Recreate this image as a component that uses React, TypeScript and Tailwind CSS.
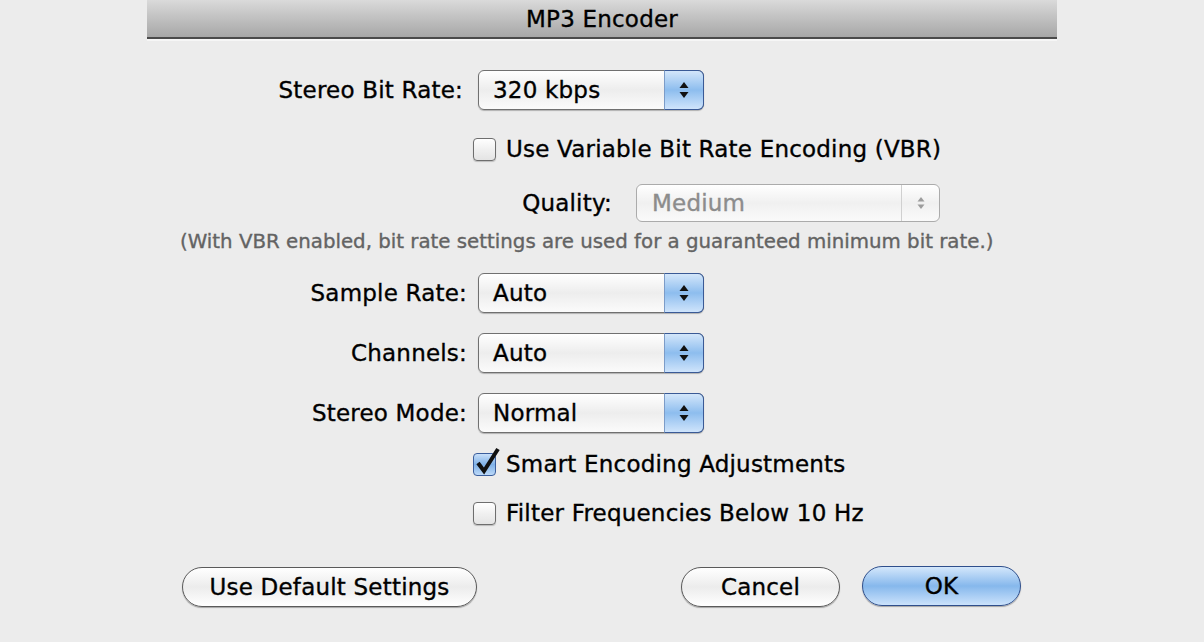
import React from "react";

const font = { fontFamily: '"DejaVu Sans", "Liberation Sans", sans-serif' };

function Arrows() {
  return (
    <svg width="12" height="22" viewBox="0 0 12 22">
      <polygon points="6,3 10.5,9 1.5,9" fill="#111" />
      <polygon points="1.5,13 10.5,13 6,19" fill="#111" />
    </svg>
  );
}

function Select({ value }: { value: string }) {
  return (
    <div className="relative w-[226px] h-[40px] rounded-[6px] border border-[#707070] bg-gradient-to-b from-white via-[#ededed] to-[#fbfbfb] shadow-[0_1px_1px_rgba(0,0,0,0.25)] flex items-center pl-[14px] text-[23px] text-black">
      {value}
      <div className="absolute -top-px -right-px -bottom-px w-[40px] rounded-r-[6px] border border-[#3a5a96] border-l-[#7c9cc8] bg-gradient-to-b from-[#d3e6fa] via-[#8dbdee] to-[#cfe4fb] flex items-center justify-center">
        <Arrows />
      </div>
    </div>
  );
}

function DisabledSelect({ value }: { value: string }) {
  return (
    <div className="relative w-[304px] h-[38px] rounded-[6px] border border-[#ababab] bg-gradient-to-b from-white via-[#f0f0f0] to-[#fafafa] flex items-center pl-[15px] text-[23px] text-[#8c8c8c]">
      {value}
      <div className="absolute top-0 right-0 bottom-0 w-[38px] border-l border-[#d0d0d0] flex items-center justify-center">
        <svg width="10" height="18" viewBox="0 0 10 18">
          <polygon points="5,3 8.5,7.5 1.5,7.5" fill="#9c9c9c" />
          <polygon points="1.5,10.5 8.5,10.5 5,15" fill="#9c9c9c" />
        </svg>
      </div>
    </div>
  );
}

function Checkbox({ checked }: { checked?: boolean }) {
  if (checked) {
    return (
      <div className="relative w-[23px] h-[23px] rounded-[4px] border border-[#3b5e9c] bg-gradient-to-b from-[#c9e0f9] via-[#7fb1e7] to-[#bcd9f8] shrink-0">
        <svg className="absolute -top-[8px] left-[1px]" width="26" height="30" viewBox="0 0 26 30">
          <path d="M3 17 L9 25 L23 3" stroke="#111" strokeWidth="4" fill="none" strokeLinejoin="miter" />
        </svg>
      </div>
    );
  }
  return (
    <div className="w-[23px] h-[23px] rounded-[4px] border border-[#6e6e6e] bg-gradient-to-b from-white via-[#f0f0f0] to-[#e4e4e4] shadow-[0_1px_1px_rgba(0,0,0,0.2)] shrink-0" />
  );
}

function Label({ children, w }: { children: React.ReactNode; w: string }) {
  return <div className={`${w} text-right text-[23px] text-black`}>{children}</div>;
}

export default function App() {
  return (
    <div
      className="w-[1204px] h-[642px] bg-[#ececec] flex justify-center overflow-hidden tracking-[0.2px] [-webkit-text-stroke:0.35px_currentColor]"
      style={font}
    >
      <div className="w-[910px] flex flex-col">
        {/* title bar */}
        <div className="h-[39px] pt-[2px] bg-gradient-to-b from-[#dadada] to-[#a7a7a7] border-b-2 border-[#4a4a4a] flex items-center justify-center text-[23px] text-black">
          MP3 Encoder
        </div>
        <div className="h-[2px] bg-[#f6f6f6]" />

        {/* Stereo Bit Rate */}
        <div className="mt-[29px] flex items-center gap-[11px]">
          <Label w="w-[320px] pr-[4px]">Stereo Bit Rate:</Label>
          <Select value="320 kbps" />
        </div>

        {/* VBR */}
        <div className="mt-[27px] ml-[326px] flex items-center gap-[10px] h-[24px] text-[23px] text-black">
          <Checkbox />
          <span>Use Variable Bit Rate Encoding (VBR)</span>
        </div>

        {/* Quality */}
        <div className="mt-[23px] flex items-center gap-[24px]">
          <Label w="w-[465px]">Quality:</Label>
          <DisabledSelect value="Medium" />
        </div>

        {/* Note */}
        <div className="mt-[10px] pl-[33px] h-[20px] flex items-center text-[19.8px] tracking-normal text-[#636363]">
          (With VBR enabled, bit rate settings are used for a guaranteed minimum bit rate.)
        </div>

        {/* Sample Rate */}
        <div className="mt-[21px] flex items-center gap-[11px]">
          <Label w="w-[320px]">Sample Rate:</Label>
          <Select value="Auto" />
        </div>

        {/* Channels */}
        <div className="mt-[20px] flex items-center gap-[11px]">
          <Label w="w-[320px]">Channels:</Label>
          <Select value="Auto" />
        </div>

        {/* Stereo Mode */}
        <div className="mt-[20px] flex items-center gap-[11px]">
          <Label w="w-[320px]">Stereo Mode:</Label>
          <Select value="Normal" />
        </div>

        {/* Smart */}
        <div className="mt-[19px] ml-[326px] flex items-center gap-[10px] h-[24px] text-[23px] text-black">
          <Checkbox checked />
          <span>Smart Encoding Adjustments</span>
        </div>

        {/* Filter */}
        <div className="mt-[25px] ml-[326px] flex items-center gap-[10px] h-[24px] text-[23px] text-black">
          <Checkbox />
          <span>Filter Frequencies Below 10 Hz</span>
        </div>

        {/* Buttons */}
        <div className="mt-[42px] pl-[35px] pr-[36px] flex items-center justify-between text-[23px] text-black">
          <button className="w-[295px] h-[40px] rounded-full border border-[#5a5a5a] bg-gradient-to-b from-white via-[#ececec] to-white shadow-[0_1px_1px_rgba(0,0,0,0.3)] flex items-center justify-center">
            Use Default Settings
          </button>
          <div className="flex items-center gap-[22px]">
            <button className="w-[159px] h-[40px] rounded-full border border-[#5a5a5a] bg-gradient-to-b from-white via-[#ececec] to-white shadow-[0_1px_1px_rgba(0,0,0,0.3)] flex items-center justify-center">
              Cancel
            </button>
            <button className="w-[159px] h-[40px] -mt-[2px] rounded-full border border-[#2f4f8c] bg-gradient-to-b from-[#d4e7fb] via-[#86b8ec] to-[#cbe2fb] shadow-[0_1px_1px_rgba(0,0,0,0.3)] flex items-center justify-center">
              OK
            </button>
          </div>
        </div>
      </div>
    </div>
  );
}
